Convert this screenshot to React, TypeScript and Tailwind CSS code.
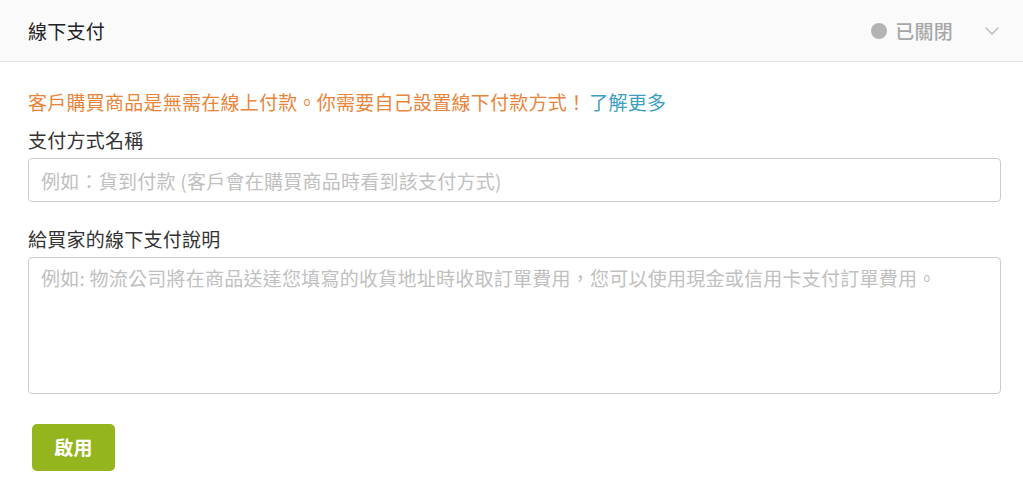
import { ChevronDown } from "lucide-react";

const font = { fontFamily: '"Noto Sans CJK TC", "Noto Sans", sans-serif' };

export default function App() {
  return (
    <div className="min-h-screen w-full bg-white tracking-[0.25px] text-[#333]" style={font}>
      {/* Header */}
      <div className="flex h-[62px] items-center justify-between border-b border-[#e3e3e3] bg-[#fafafa] pl-[28px] pr-[19px]">
        <span className="text-[19px] leading-none text-[#222]">線下支付</span>
        <div className="flex items-center">
          <span className="h-[16px] w-[16px] rounded-full bg-[#b3b3b3]" />
          <span className="ml-[8px] text-[19px] font-medium leading-none text-[#a6a6a6]">已關閉</span>
          <ChevronDown size={24} strokeWidth={1.2} className="ml-[27px] text-[#b5b5b5]" />
        </div>
      </div>

      {/* Body */}
      <div className="flex flex-col pl-[28px] pr-[22px]">
        <p className="mt-[26px] text-[19px] leading-[28px] text-[#e8853a]">
          客戶購買商品是無需在線上付款。你需要自己設置線下付款方式！
          <a className="ml-[3px] text-[#3aa0c2]">了解更多</a>
        </p>

        <label className="mt-[10px] text-[19px] leading-[28px] text-[#333]">支付方式名稱</label>
        <input
          className="mt-[4px] h-[44px] w-full rounded-[4px] border border-[#cccccc] px-[12px] text-[19px] outline-none placeholder:text-[#c0c0c0]"
          placeholder="例如：貨到付款 (客戶會在購買商品時看到該支付方式)"
        />

        <label className="mt-[23px] text-[19px] leading-[28px] text-[#333]">給買家的線下支付說明</label>
        <textarea
          className="mt-[4px] h-[137px] w-full resize-none rounded-[4px] border border-[#cccccc] px-[12px] py-[6px] text-[19px] leading-[28px] outline-none placeholder:text-[#c0c0c0]"
          placeholder="例如: 物流公司將在商品送達您填寫的收貨地址時收取訂單費用，您可以使用現金或信用卡支付訂單費用。"
        />

        <div className="mt-[30px]">
          <button className="ml-[4px] h-[47px] w-[83px] rounded-[5px] bg-[#94b51d] text-[19px] font-bold text-white">
            啟用
          </button>
        </div>
      </div>
    </div>
  );
}
